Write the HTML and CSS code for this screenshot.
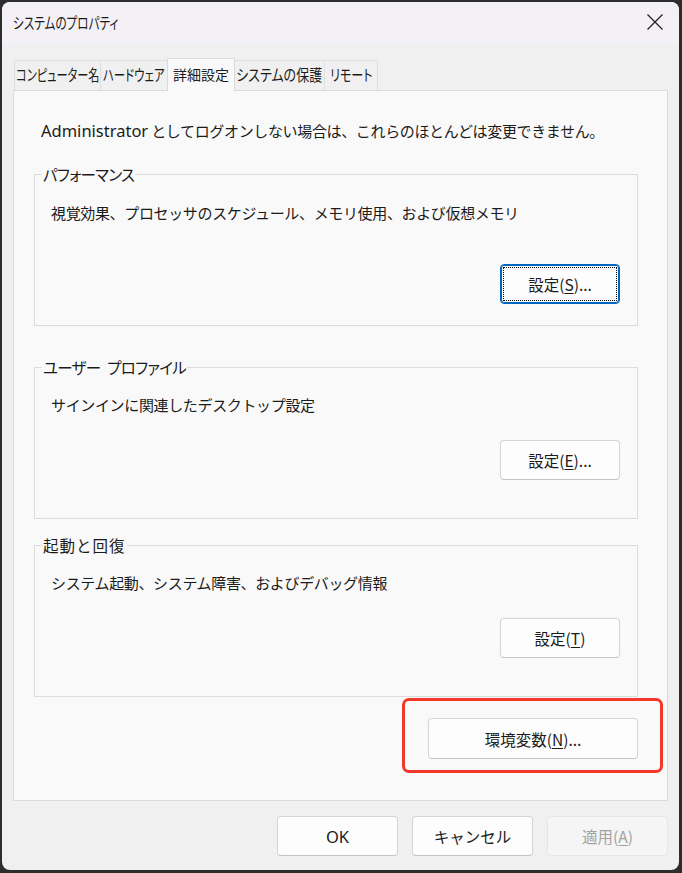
FILE: index.html
```html
<!DOCTYPE html>
<html lang="ja">
<head>
<meta charset="utf-8">
<title>システムのプロパティ</title>
<link rel="stylesheet" href="styles.css">
</head>
<body>
<div class="window">
  <header class="titlebar">
    <span class="title">システムのプロパティ</span>
    <svg class="close" width="16" height="16" viewBox="0 0 16 16" aria-label="閉じる">
      <path d="M0.5 0.5L15.5 15.5M15.5 0.5L0.5 15.5" stroke="#1c1c1c" stroke-width="1.2" fill="none"/>
    </svg>
  </header>
  <main class="content">
    <nav class="tabs">
      <div class="tab tab-computer"><span class="tab-label">コンピューター名</span></div>
      <div class="tab tab-hardware"><span class="tab-label">ハードウェア</span></div>
      <div class="tab tab-advanced active"><span class="tab-label">詳細設定</span></div>
      <div class="tab tab-protect"><span class="tab-label">システムの保護</span></div>
      <div class="tab tab-remote"><span class="tab-label">リモート</span></div>
    </nav>
    <section class="panel">
      <p class="note"><span class="latin">Administrator</span> としてログオンしない場合は、これらのほとんどは変更できません。</p>

      <fieldset class="group group-perf">
        <legend>パフォーマンス</legend>
        <div class="group-body">
          <p class="desc">視覚効果、プロセッサのスケジュール、メモリ使用、および仮想メモリ</p>
          <div class="actions"><button class="btn focused">設定(<u>S</u>)...</button></div>
        </div>
      </fieldset>

      <fieldset class="group group-profile">
        <legend>ユーザー プロファイル</legend>
        <div class="group-body">
          <p class="desc">サインインに関連したデスクトップ設定</p>
          <div class="actions"><button class="btn">設定(<u>E</u>)...</button></div>
        </div>
      </fieldset>

      <fieldset class="group group-startup">
        <legend>起動と回復</legend>
        <div class="group-body">
          <p class="desc">システム起動、システム障害、およびデバッグ情報</p>
          <div class="actions"><button class="btn">設定(<u>T</u>)</button></div>
        </div>
      </fieldset>

      <div class="env-row">
        <div class="highlight">
          <button class="btn env">環境変数(<u>N</u>)...</button>
        </div>
      </div>
    </section>
    <footer class="dialog-buttons">
      <button class="btn footer-btn"><span class="latin">OK</span></button>
      <button class="btn footer-btn">キャンセル</button>
      <button class="btn footer-btn disabled">適用(<u>A</u>)</button>
    </footer>
  </main>
</div>
</body>
</html>
```
FILE: styles.css
```css
html, body {
  margin: 0;
  padding: 0;
  background: #2d2d2d;
}

body {
  font-family: "Noto Sans CJK JP", "Noto Sans", sans-serif;
  font-size: 15px;
  color: #1b1b1b;
}

.latin {
  font-family: "Noto Sans", "Noto Sans CJK JP", sans-serif;
  font-size: 16.5px;
  letter-spacing: 0;
}

.window {
  margin: 2px 0 0 2px;
  width: 677px;
  height: 868px;
  border-radius: 8px;
  background: #f0f0f0;
  overflow: hidden;
  display: flex;
  flex-direction: column;
}

.titlebar {
  height: 42px;
  flex: none;
  background: #f3f1f6;
  display: flex;
  align-items: center;
  justify-content: space-between;
  padding: 0 16px 0 11px;
}

.title {
  display: inline-block;
  font-size: 15.5px;
  font-feature-settings: "palt";
  white-space: nowrap;
  padding-bottom: 2px;
  transform: scaleX(0.75);
  transform-origin: left center;
}

.close {
  display: block;
  width: 16px;
  height: 16px;
  margin-top: -2px;
}

.content {
  flex: 1;
  display: flex;
  flex-direction: column;
  padding: 15px 11px 0 11px;
}

.tabs {
  display: flex;
  align-items: flex-end;
  height: 31px;
  padding-left: 1px;
  position: relative;
  z-index: 1;
}

.tab {
  box-sizing: border-box;
  height: 30px;
  border: 1px solid #dfdfdf;
  border-bottom: none;
  background: #f0f0f0;
  font-size: 15.5px;
  white-space: nowrap;
  display: flex;
  align-items: center;
  justify-content: center;
  margin-left: -1px;
  line-height: 1;
  padding-bottom: 1px;
  flex: none;
  overflow: visible;
}

.tab-label {
  display: inline-block;
  font-feature-settings: "palt";
  transform: scaleX(var(--sx, 1));
  transform-origin: center;
}

.tab:first-child { margin-left: 0; }

.tab-computer { width: 87px; --sx: 0.72; }
.tab-hardware { width: 68px; --sx: 0.74; }
.tab-advanced { width: 68px; --sx: 1; }
.tab-protect { width: 91px; --sx: 0.84; }
.tab-remote { width: 54px; --sx: 0.78; }

.tab.active {
  height: 33px;
  margin-bottom: -1px;
  background: #f9f9f9;
  border-color: #dadada;
  padding-bottom: 3px;
  margin-right: -1px;
  position: relative;
  z-index: 2;
}

.tab.active .tab-label {
  font-feature-settings: normal;
  font-size: 14px;
}

.tab.active + .tab { margin-left: 0; }

.panel {
  box-sizing: border-box;
  height: 711px;
  flex: none;
  background: #f9f9f9;
  border: 1px solid #dadada;
  padding: 30px 29px 0 20px;
  display: flex;
  flex-direction: column;
  letter-spacing: -0.35px;
}

.note {
  margin: 0 0 0 7px;
  line-height: 20px;
}

.group {
  margin: 0;
  padding: 0;
  border: 1px solid #dcdcdc;
  min-width: 0;
}

.group legend {
  margin-left: 7px;
  padding: 0 1px;
  line-height: 20px;
  font-size: 15.5px;
  letter-spacing: -0.7px;
  word-spacing: 4px;
  font-feature-settings: "palt";
}

.group-startup legend {
  font-feature-settings: normal;
  letter-spacing: 1px;
}

.group-body {
  padding: 0 17px 0 16px;
}

.desc {
  margin: 18px 0 0 0;
  line-height: 20px;
}

.actions {
  display: flex;
  justify-content: flex-end;
  margin-top: 25px;
}

.group-perf { margin-top: 23px; }
.group-perf .desc { margin-top: 19px; }
.group-perf .actions { margin-top: 41px; }
.group-perf .group-body { padding-bottom: 21px; }

.group-profile { margin-top: 31px; }
.group-profile .group-body { padding-bottom: 38px; }

.group-startup { margin-top: 16px; }
.group-startup .group-body { padding-bottom: 38px; }

.btn {
  box-sizing: border-box;
  width: 120px;
  height: 40px;
  font-family: inherit;
  font-size: 15.5px;
  letter-spacing: 0;
  color: #1b1b1b;
  background: #fdfdfd;
  border: 1px solid #d4d4d4;
  border-bottom-color: #c4c4c4;
  border-radius: 4px;
  padding: 0;
  display: flex;
  align-items: center;
  justify-content: center;
  position: relative;
}

.btn u {
  text-underline-offset: 2px;
}

.btn.focused {
  border: 1px solid #0067c0;
  box-shadow: inset 0 0 0 1px #0067c0;
}

.btn.focused::after {
  content: "";
  position: absolute;
  inset: 2px;
  border: 1px dotted #000;
  border-radius: 1px;
}

.env-row {
  display: flex;
  justify-content: flex-end;
  margin-top: 21px;
}

.highlight {
  position: relative;
}

.highlight::after {
  content: "";
  position: absolute;
  left: -26px;
  right: -25px;
  top: -20px;
  bottom: -14px;
  border: 3px solid #f2382b;
  border-radius: 7px;
  pointer-events: none;
}

.btn.env {
  width: 210px;
  height: 41px;
}

.dialog-buttons {
  display: flex;
  justify-content: flex-end;
  gap: 14px;
  margin-top: 15px;
}

.footer-btn {
  width: 121px;
  height: 40px;
}

.btn.disabled {
  background: #f5f5f5;
  border-color: #e6e6e6;
  color: #a2a2a2;
}
```
